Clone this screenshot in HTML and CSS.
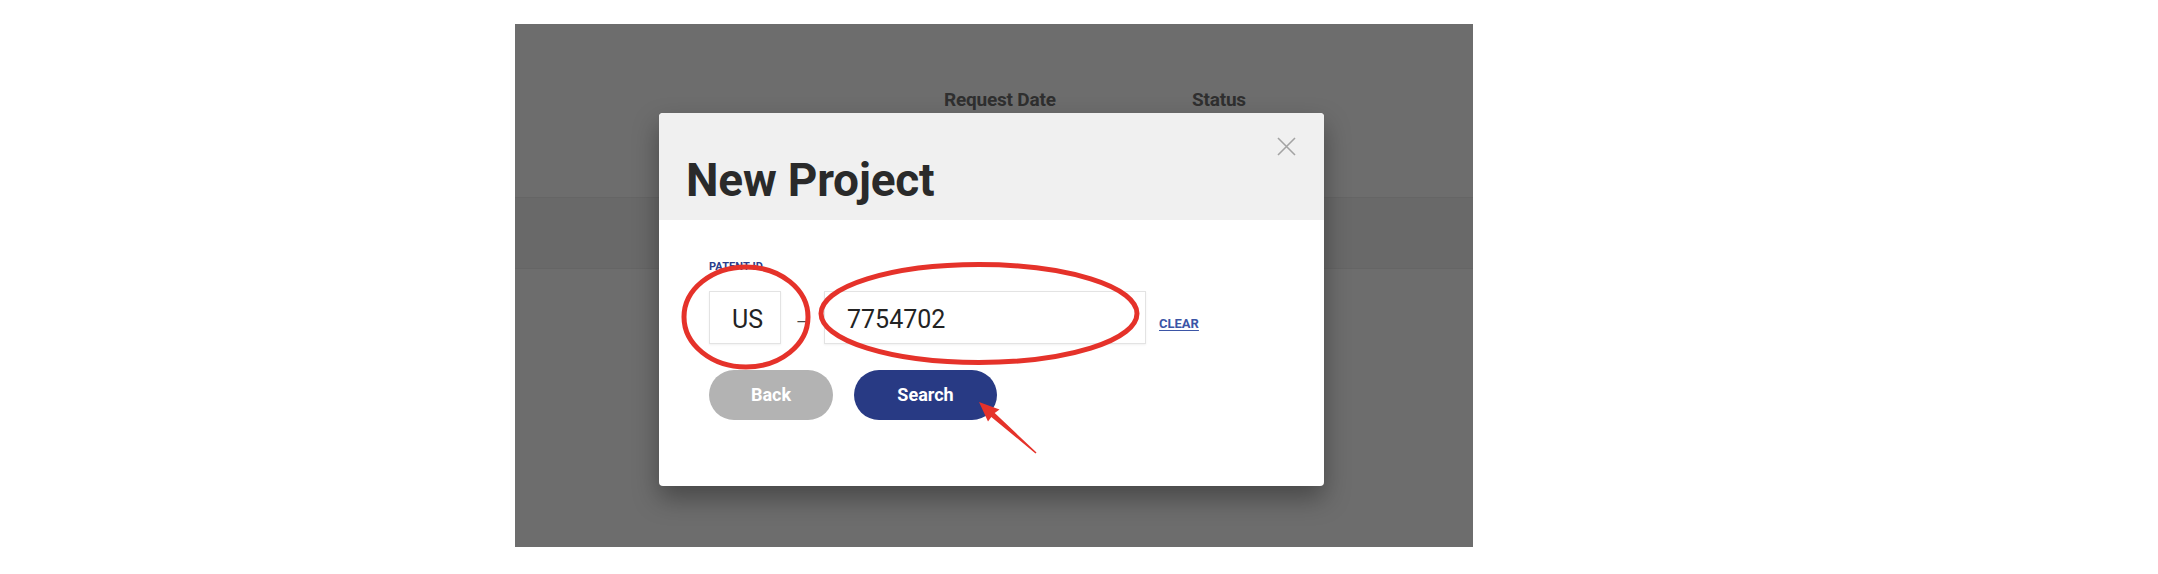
FILE: index.html
```html
<!DOCTYPE html>
<html lang="en">
<head>
<meta charset="utf-8">
<title>New Project</title>
<link rel="stylesheet" href="styles.css">
</head>
<body>
<div class="page">
  <div class="frame">
    <div class="table-head">
      <span class="col col-date">Request Date</span>
      <span class="col col-status">Status</span>
    </div>
    <div class="table-row"></div>

    <div class="modal">
      <div class="modal-header">
        <h1 class="modal-title">New Project</h1>
        <svg class="close" viewBox="0 0 19 19" width="19" height="19" aria-label="Close">
          <path d="M1 1 L18 18 M18 1 L1 18" stroke="#a3a3a3" stroke-width="1.6" fill="none"/>
        </svg>
      </div>
      <div class="modal-body">
        <div class="field-label">PATENT ID</div>
        <div class="field-row">
          <div class="box box-country">US</div>
          <span class="dash">–</span>
          <div class="box box-number">7754702</div>
          <a class="clear" href="#">CLEAR</a>
        </div>
        <div class="actions">
          <button class="btn btn-back">Back</button>
          <button class="btn btn-search">Search</button>
        </div>
      </div>
    </div>
  </div>

  <svg class="annotations" width="2158" height="574" viewBox="0 0 2158 574">
    <ellipse cx="746" cy="317" rx="62" ry="50" fill="none" stroke="#e5322a" stroke-width="5"/>
    <ellipse cx="979" cy="313.5" rx="158" ry="49" fill="none" stroke="#e5322a" stroke-width="5"/>
    <polygon fill="#e5322a" points="979,402 999.5,409.5 994.7,413.1 1036.5,452.5 1035.5,453.5 991.3,416.9 988,421.5"/>
  </svg>
</div>
</body>
</html>
```

FILE: styles.css
```css
* { box-sizing: border-box; }

html, body {
  margin: 0;
  padding: 0;
  background: #ffffff;
}

body {
  font-family: Roboto, "Liberation Sans", Arial, sans-serif;
  width: 2158px;
  height: 574px;
  overflow: hidden;
}

.page {
  position: relative;
  width: 2158px;
  height: 574px;
  padding: 24px 0 0 515px;
}

.frame {
  position: relative;
  width: 958px;
  height: 523px;
  background: #6d6d6d;
  overflow: hidden;
}

.table-head {
  display: flex;
  height: 174px;
  padding: 65px 0 0 429px;
  border-bottom: 1px solid #656565;
}

.col {
  font-size: 19px;
  line-height: 22px;
  font-weight: 700;
  color: #2f2f2f;
  letter-spacing: -0.2px;
}

.col-date { width: 248px; }

.table-row {
  height: 71px;
  background: #696969;
  border-bottom: 1px solid #656565;
}

.modal {
  position: absolute;
  left: 144px;
  top: 89px;
  width: 665px;
  height: 373px;
  background: #ffffff;
  border-radius: 4px;
  box-shadow: 0 12px 26px rgba(0, 0, 0, 0.35);
  overflow: hidden;
}

.modal-header {
  position: relative;
  height: 107px;
  background: #f0f0f0;
  padding: 44px 0 0 27px;
}

.modal-title {
  margin: 0;
  font-size: 46px;
  line-height: 46px;
  font-weight: 700;
  color: #2a2a2a;
  letter-spacing: -0.2px;
}

.close {
  position: absolute;
  top: 24px;
  right: 28px;
}

.modal-body {
  padding: 40px 0 0 50px;
}

.field-label {
  font-size: 11px;
  line-height: 13px;
  font-weight: 700;
  color: #2c3e8c;
  letter-spacing: 0.1px;
}

.field-row {
  display: flex;
  align-items: baseline;
  margin-top: 18px;
}

.box {
  height: 53px;
  border: 1px solid #e3e3e3;
  box-shadow: 0 1px 2px rgba(0, 0, 0, 0.06);
  background: #ffffff;
  padding: 15px 0 0 22px;
  font-size: 25px;
  line-height: 25px;
  color: #232323;
}

.box-country { width: 72px; }

.box-number { width: 322px; }

.dash {
  width: 11px;
  margin: 0 17px 0 15px;
  font-size: 18px;
  color: #4a4a4a;
  overflow: hidden;
}

.clear {
  margin-left: 13px;
  font-size: 13px;
  font-weight: 700;
  color: #3b55a6;
  text-decoration: underline;
  text-underline-offset: 2px;
}

.actions {
  display: flex;
  gap: 21px;
  margin-top: 26px;
}

.btn {
  height: 50px;
  border: 0;
  border-radius: 25px;
  font-family: Roboto, "Liberation Sans", Arial, sans-serif;
  font-size: 18px;
  font-weight: 700;
  color: #ffffff;
  padding: 0 0 2px;
}

.btn-back {
  width: 124px;
  background: #b3b3b3;
}

.btn-search {
  width: 143px;
  background: #283a84;
}

.annotations {
  position: absolute;
  left: 0;
  top: 0;
  pointer-events: none;
}
```
